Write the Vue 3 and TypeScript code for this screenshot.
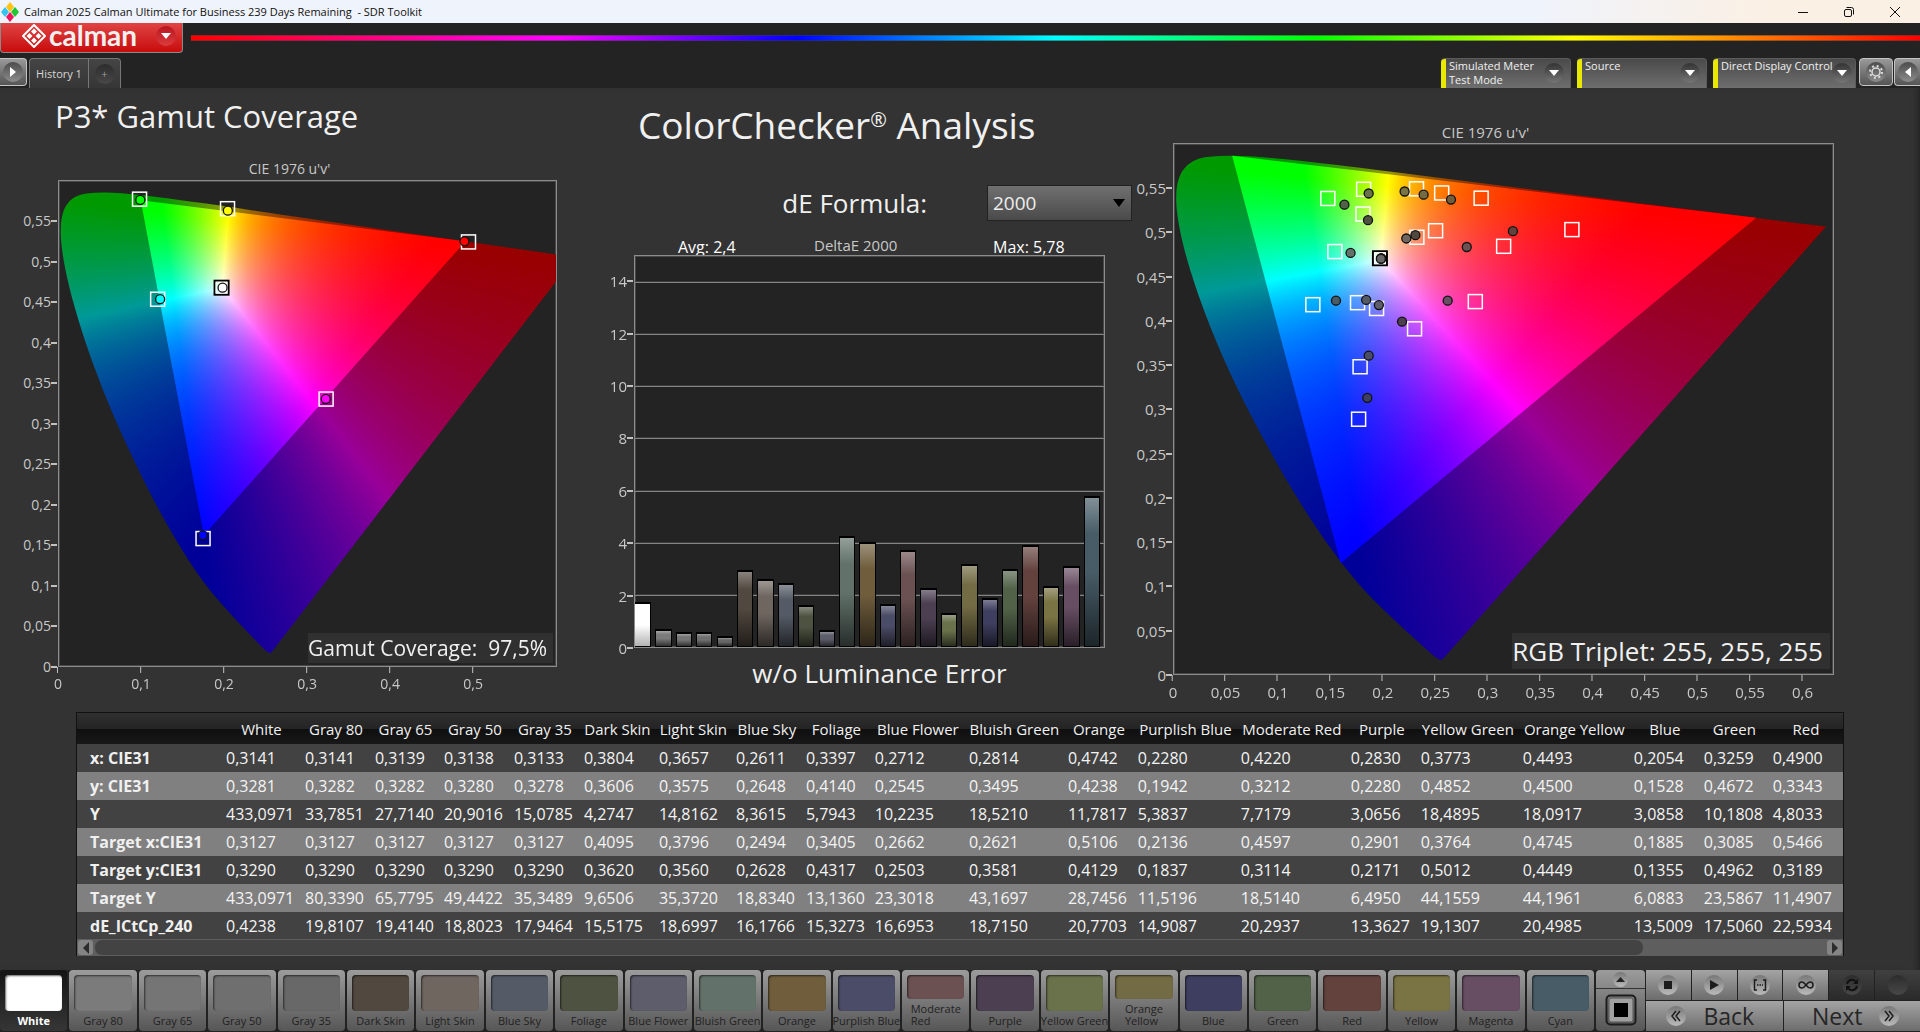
<script setup lang="ts">
import { onMounted, ref } from 'vue'

type Point = [number, number]

interface Patch {
  name: string
  color: string
  deltaE: number
  target: Point
  measured: Point
}

interface Axis {
  max: number
  ticks: number[]
}

/* CIE 1931 xy to CIE 1976 u'v' */
function uv(x: number, y: number): Point {
  const d = -2 * x + 12 * y + 3
  return [(4 * x) / d, (9 * y) / d]
}

const names = [
  'White', 'Gray 80', 'Gray 65', 'Gray 50', 'Gray 35', 'Dark Skin', 'Light Skin', 'Blue Sky', 'Foliage',
  'Blue Flower', 'Bluish Green', 'Orange', 'Purplish Blue', 'Moderate Red', 'Purple', 'Yellow Green',
  'Orange Yellow', 'Blue', 'Green', 'Red',
]

const columnWidths = [145, 79, 70, 69, 70, 70, 75, 77, 70, 69, 94, 99, 70, 103, 110, 70, 102, 111, 70, 69, 74]
const totalWidth = columnWidths.reduce((sum, w) => sum + w, 0)

const rows: { label: string; values: string[] }[] = [
  { label: 'x: CIE31', values: '0,3141 0,3141 0,3139 0,3138 0,3133 0,3804 0,3657 0,2611 0,3397 0,2712 0,2814 0,4742 0,2280 0,4220 0,2830 0,3773 0,4493 0,2054 0,3259 0,4900'.split(' ') },
  { label: 'y: CIE31', values: '0,3281 0,3282 0,3282 0,3280 0,3278 0,3606 0,3575 0,2648 0,4140 0,2545 0,3495 0,4238 0,1942 0,3212 0,2280 0,4852 0,4500 0,1528 0,4672 0,3343'.split(' ') },
  { label: 'Y', values: '433,0971 33,7851 27,7140 20,9016 15,0785 4,2747 14,8162 8,3615 5,7943 10,2235 18,5210 11,7817 5,3837 7,7179 3,0656 18,4895 18,0917 3,0858 10,1808 4,8033'.split(' ') },
  { label: 'Target x:CIE31', values: '0,3127 0,3127 0,3127 0,3127 0,3127 0,4095 0,3796 0,2494 0,3405 0,2662 0,2621 0,5106 0,2136 0,4597 0,2901 0,3764 0,4745 0,1885 0,3085 0,5466'.split(' ') },
  { label: 'Target y:CIE31', values: '0,3290 0,3290 0,3290 0,3290 0,3290 0,3620 0,3560 0,2628 0,4317 0,2503 0,3581 0,4129 0,1837 0,3114 0,2171 0,5012 0,4449 0,1355 0,4962 0,3189'.split(' ') },
  { label: 'Target Y', values: '433,0971 80,3390 65,7795 49,4422 35,3489 9,6506 35,3720 18,8340 13,1360 23,3018 43,1697 28,7456 11,5196 18,5140 6,4950 44,1559 44,1961 6,0883 23,5867 11,4907'.split(' ') },
  { label: 'dE_ICtCp_240', values: '0,4238 19,8107 19,4140 18,8023 17,9464 15,5175 18,6997 16,1766 15,3273 16,6953 18,7150 20,7703 14,9087 20,2937 13,3627 19,1307 20,4985 13,5009 17,5060 22,5934'.split(' ') },
]

const colors = [
  '#ffffff', '#7b7b7b', '#757575', '#6f6f6f', '#686868', '#51483f', '#6f6660', '#545b66', '#4e5341', '#5d5d6b',
  '#62726b', '#6f5d3c', '#4b4c67', '#6b5152', '#4b3f51', '#69724b', '#736b44', '#3e3e60', '#516248', '#63423e',
]
const deltas = [
  1.72, 0.69, 0.58, 0.58, 0.42, 2.95, 2.6, 2.45, 1.61, 0.65, 4.25, 4.02, 1.65, 3.72, 2.27, 1.31, 3.18, 1.88, 3, 3.9,
]

const num = (text: string) => Number(text.replace(',', '.'))

const patches: Patch[] = names.map((name, i) => ({
  name,
  color: colors[i],
  deltaE: deltas[i],
  target: uv(num(rows[3].values[i]), num(rows[4].values[i])),
  measured: uv(num(rows[0].values[i]), num(rows[1].values[i])),
}))
patches.push(
  { name: 'Yellow', color: '#7a7343', deltaE: 2.34, target: [0.2328, 0.5465], measured: [0.2214, 0.5435] },
  { name: 'Magenta', color: '#674e63', deltaE: 3.12, target: [0.289, 0.4195], measured: [0.2626, 0.4205] },
  { name: 'Cyan', color: '#475c67', deltaE: 5.78, target: [0.1337, 0.416], measured: [0.1558, 0.4205] },
)

const gamutPoints: { color: string; target: Point; measured: Point }[] = [
  { color: '#00ff00', target: [0.0986, 0.5785], measured: [0.0995, 0.5775] },
  { color: '#ffff00', target: [0.205, 0.5667], measured: [0.2054, 0.5642] },
  { color: '#ff0000', target: [0.4964, 0.5255], measured: [0.4915, 0.5262] },
  { color: '#00ffff', target: [0.1205, 0.4545], measured: [0.1235, 0.4545] },
  { color: '#ff00ff', target: [0.3242, 0.3308], measured: [0.3238, 0.331] },
  { color: '#0000ff', target: [0.1754, 0.1579], measured: [0.1752, 0.162] },
  { color: '#ffffff', target: [0.1978, 0.4688], measured: [0.199, 0.4688] },
]

const steps = (count: number, step: number) => Array.from({ length: count }, (_, i) => i * step)
const uAxisLeft: Axis = { max: 0.601, ticks: steps(6, 0.1) }
const vAxisLeft: Axis = { max: 0.601, ticks: steps(12, 0.05) }
const uAxisRight: Axis = { max: 0.63, ticks: steps(13, 0.05) }
const vAxisRight: Axis = { max: 0.601, ticks: steps(12, 0.05) }
const vMarkers: Axis = { max: 0.597, ticks: [] }
const deltaAxis: Axis = { max: 15, ticks: steps(8, 2) }

const pct = (value: number, axis: Axis) => (value / axis.max) * 100 + '%'
const pctDown = (value: number, axis: Axis) => (1 - value / axis.max) * 100 + '%'
const label = (value: number) => String(Math.round(value * 100) / 100).replace('.', ',')

/* Spectral locus, CIE 1931 xy, 380 nm to 700 nm */
const locus: Point[] = [
  [0.1741, 0.005], [0.1733, 0.0048], [0.1714, 0.0051], [0.1689, 0.0069], [0.1644, 0.0109], [0.1566, 0.0177],
  [0.144, 0.0297], [0.1355, 0.0399], [0.1241, 0.0578], [0.1096, 0.0868], [0.0913, 0.1327], [0.0687, 0.2007],
  [0.0454, 0.295], [0.0235, 0.4127], [0.0082, 0.5384], [0.0039, 0.6548], [0.0139, 0.7502], [0.0389, 0.812],
  [0.0743, 0.8338], [0.1142, 0.8262], [0.1547, 0.8059], [0.1929, 0.7816], [0.2296, 0.7543], [0.3016, 0.6923],
  [0.3731, 0.6245], [0.4441, 0.5547], [0.5125, 0.4866], [0.5752, 0.4242], [0.627, 0.3725], [0.6658, 0.334],
  [0.6915, 0.3083], [0.719, 0.2809], [0.7347, 0.2653],
]
const locusUv = locus.map(([x, y]) => uv(x, y))

function chromaticityColor(u: number, v: number): [number, number, number] {
  const d = 6 * u - 16 * v + 12
  const x = (9 * u) / d
  const y = Math.max((4 * v) / d, 0.0001)
  const X = x / y
  const Z = (1 - x - y) / y
  const r = Math.max(0, 3.2406 * X - 1.5372 - 0.4986 * Z)
  const g = Math.max(0, -0.9689 * X + 1.8758 + 0.0415 * Z)
  const b = Math.max(0, 0.0557 * X - 0.204 + 1.057 * Z)
  const scale = 255 / Math.max(r, g, b)
  return [r * scale, g * scale, b * scale]
}

function drawDiagram(canvas: HTMLCanvasElement, uMax: number, vMax: number, gamut: Point[]) {
  const w = (canvas.width = canvas.clientWidth)
  const h = (canvas.height = canvas.clientHeight)
  const ctx = canvas.getContext('2d')
  if (!ctx || !w || !h) return
  const layer = (shade: number, outline: Point[], smooth: boolean) => {
    const sheet = document.createElement('canvas')
    sheet.width = w
    sheet.height = h
    const c = sheet.getContext('2d')!
    const image = c.createImageData(w, h)
    for (let j = 0; j < h; j++) {
      for (let i = 0; i < w; i++) {
        const rgb = chromaticityColor(((i + 0.5) / w) * uMax, (1 - (j + 0.5) / h) * vMax)
        const o = (j * w + i) * 4
        image.data[o] = rgb[0] * shade
        image.data[o + 1] = rgb[1] * shade
        image.data[o + 2] = rgb[2] * shade
        image.data[o + 3] = 255
      }
    }
    c.putImageData(image, 0, 0)
    c.globalCompositeOperation = 'destination-in'
    const p = outline.map(([u, v]): Point => [(u / uMax) * w, (1 - v / vMax) * h])
    c.beginPath()
    c.moveTo(p[0][0], p[0][1])
    for (let i = 1; i < p.length; i++) {
      if (smooth && i < p.length - 1) {
        c.quadraticCurveTo(p[i][0], p[i][1], (p[i][0] + p[i + 1][0]) / 2, (p[i][1] + p[i + 1][1]) / 2)
      } else {
        c.lineTo(p[i][0], p[i][1])
      }
    }
    c.closePath()
    c.fill()
    return sheet
  }
  ctx.drawImage(layer(0.6, locusUv, true), 0, 0)
  ctx.drawImage(layer(1, gamut, false), 0, 0)
}

const leftCanvas = ref<HTMLCanvasElement | null>(null)
const rightCanvas = ref<HTMLCanvasElement | null>(null)

onMounted(() => {
  if (leftCanvas.value) {
    drawDiagram(leftCanvas.value, uAxisLeft.max, vAxisLeft.max, [[0.4915, 0.5262], [0.0988, 0.577], [0.1752, 0.162]])
  }
  if (rightCanvas.value) {
    drawDiagram(rightCanvas.value, uAxisRight.max, 0.6, [[0.5566, 0.5165], [0.0556, 0.5868], [0.1593, 0.1258]])
  }
})

const formula = ref('2000')
const selected = ref('White')
const wrapped: Record<string, string> = { 'Moderate Red': 'Moderate\nRed', 'Orange Yellow': 'Orange\nYellow' }
const devices = [
  { text: 'Simulated Meter\nTest Mode', wide: false },
  { text: 'Source', wide: false },
  { text: 'Direct Display Control', wide: true },
]
</script>

<template>
  <div class="app">
    <div class="titlebar">
      <svg class="app-icon" width="18" height="20" viewBox="0 0 18 20" aria-hidden="true">
        <path d="M9 0l4 5-4 5-4-5z" fill="#ffc20e" />
        <path d="M4 5l4 5-4 5-4-5z" fill="#35c4f0" />
        <path d="M14 5l4 5-4 5-4-5z" fill="#22c532" />
        <path d="M9 10l4 5-4 5-4-5z" fill="#f0145a" />
      </svg>
      <span class="window-title">Calman 2025 Calman Ultimate for Business 239 Days Remaining&nbsp; - SDR Toolkit</span>
      <div class="window-buttons">
        <button type="button" aria-label="Minimize">
          <svg width="12" height="12" viewBox="0 0 12 12"><path d="M1 6.500h10" stroke="#111" fill="none" /></svg>
        </button>
        <button type="button" aria-label="Restore">
          <svg width="12" height="12" viewBox="0 0 12 12" fill="none" stroke="#111">
            <rect x="1.500" y="3.500" width="7" height="7" rx="1.500" />
            <path d="M3.500 1.500h5a2 2 0 0 1 2 2v5" />
          </svg>
        </button>
        <button type="button" aria-label="Close">
          <svg width="12" height="12" viewBox="0 0 12 12"><path d="M1 1l10 10M11 1L1 11" stroke="#111" fill="none" /></svg>
        </button>
      </div>
    </div>

    <header class="header">
      <div class="brand-row">
        <button type="button" class="brand">
          <svg width="24" height="24" viewBox="0 0 24 24" aria-hidden="true">
            <path d="M12 1l11 11-11 11L1 12z" fill="none" stroke="#fff" stroke-width="2" stroke-linejoin="round" />
            <path d="M12 4.500l3 3-3 3-3-3zM7.500 9l3 3-3 3-3-3zM16.500 9l3 3-3 3-3-3zM12 13.500l3 3-3 3-3-3z" fill="#fff" />
          </svg>
          <span class="wordmark">calman</span>
          <span class="round red-round"><svg width="10" height="6" viewBox="0 0 10 6"><path d="M0 0h10L5 6z" fill="#fff" /></svg></span>
        </button>
        <div class="spectrum"></div>
      </div>
      <div class="tab-row">
        <button type="button" class="square-button first" aria-label="Expand">
          <span class="round"><svg width="6" height="10" viewBox="0 0 6 10"><path d="M0 0v10l6-5z" fill="#fff" /></svg></span>
        </button>
        <div class="tabs">
          <button type="button" class="tab">History 1</button>
          <button type="button" class="tab add" aria-label="Add tab"><span class="round dark-round">+</span></button>
        </div>
        <div class="devices">
          <button v-for="d in devices" :key="d.text" type="button" class="device" :class="{ wide: d.wide }">
            <span class="device-text">{{ d.text }}</span>
            <span class="round deep-round"><svg width="10" height="6" viewBox="0 0 10 6"><path d="M0 0h10L5 6z" fill="#fff" /></svg></span>
          </button>
          <button type="button" class="square-button gear" aria-label="Settings">
            <span class="round">
              <svg width="14" height="14" viewBox="0 0 14 14">
                <circle cx="7" cy="7" r="4" fill="none" stroke="#ddd" stroke-width="1.500" />
                <circle cx="7" cy="7" r="6" fill="none" stroke="#ddd" stroke-width="2" stroke-dasharray="2 2.710" />
              </svg>
            </span>
          </button>
          <button type="button" class="square-button last" aria-label="Collapse">
            <span class="round"><svg width="6" height="10" viewBox="0 0 6 10"><path d="M6 0v10L0 5z" fill="#fff" /></svg></span>
          </button>
        </div>
      </div>
    </header>

    <main class="main">
      <div class="panels">
        <section class="panel left">
          <h1 class="gamut-title">P3* Gamut Coverage</h1>
          <div class="chart">
            <div class="chart-title">CIE 1976 u'v'</div>
            <div class="y-axis">
              <span v-for="t in vAxisLeft.ticks" :key="t" class="y-tick" :style="{ top: pctDown(t, vAxisLeft) }">{{ label(t) }}</span>
            </div>
            <div class="plot left-plot">
              <canvas ref="leftCanvas" class="layer"></canvas>
              <svg class="layer markers">
                <svg v-for="(p, i) in gamutPoints" :key="'t' + i" class="spot" :x="pct(p.target[0], uAxisLeft)" :y="pctDown(p.target[1], vAxisLeft)">
                  <rect v-if="i === 6" x="-7" y="-7" width="14" height="14" fill="none" stroke="#000" stroke-width="2" />
                  <rect v-else x="-7" y="-7" width="14" height="14" fill="none" stroke="#fff" stroke-width="1.500" />
                  <rect v-if="i === 6" x="-5.500" y="-5.500" width="11" height="11" fill="none" stroke="#fff" />
                </svg>
                <svg v-for="(p, i) in gamutPoints" :key="'m' + i" class="spot" :x="pct(p.measured[0], uAxisLeft)" :y="pctDown(p.measured[1], vAxisLeft)">
                  <circle r="4.500" :fill="p.color" stroke="#111" stroke-width="1.300" />
                </svg>
              </svg>
              <div class="note small-note">Gamut Coverage:&nbsp; 97,5%</div>
            </div>
            <div class="x-axis">
              <span v-for="t in uAxisLeft.ticks" :key="t" class="x-tick" :style="{ left: pct(t, uAxisLeft) }">{{ label(t) }}</span>
            </div>
          </div>
        </section>

        <section class="panel center">
          <h2 class="analysis-title">ColorChecker<span class="registered">®</span> Analysis</h2>
          <div class="formula">
            <label for="formula">dE Formula:</label>
            <div class="select-wrap">
              <select id="formula" v-model="formula">
                <option>2000</option>
              </select>
              <svg width="12" height="8" viewBox="0 0 12 8" aria-hidden="true"><path d="M0 0h12L6 8z" fill="#000" /></svg>
            </div>
          </div>
          <div class="stats">
            <span class="stat">Avg: 2,4</span>
            <span class="stat-title">DeltaE 2000</span>
            <span class="stat">Max: 5,78</span>
          </div>
          <div class="chart center-chart">
            <div class="y-axis">
              <span v-for="t in deltaAxis.ticks" :key="t" class="y-tick" :style="{ top: pctDown(t, deltaAxis) }">{{ t }}</span>
            </div>
            <div class="plot bar-plot">
              <i v-for="t in deltaAxis.ticks.slice(1)" :key="t" class="grid-line" :style="{ top: pctDown(t, deltaAxis) }"></i>
              <div class="bars">
                <div v-for="p in patches" :key="p.name" class="bar" :class="{ white: p.name === 'White' }" :style="{ height: pct(p.deltaE, deltaAxis), backgroundColor: p.color }"></div>
              </div>
            </div>
          </div>
          <div class="luminance">w/o Luminance Error</div>
        </section>

        <section class="panel right">
          <div class="chart">
            <div class="chart-title">CIE 1976 u'v'</div>
            <div class="y-axis">
              <span v-for="t in vAxisRight.ticks" :key="t" class="y-tick" :style="{ top: pctDown(t, vAxisRight) }">{{ label(t) }}</span>
            </div>
            <div class="plot right-plot">
              <canvas ref="rightCanvas" class="layer"></canvas>
              <svg class="layer markers">
                <svg v-for="(p, i) in patches.slice(5)" :key="'t' + i" class="spot" :x="pct(p.target[0], uAxisRight)" :y="pctDown(p.target[1], vMarkers)">
                  <rect x="-7" y="-7" width="14" height="14" fill="none" stroke="#fff" stroke-width="1.500" />
                </svg>
                <svg class="spot" :x="pct(patches[0].target[0], uAxisRight)" :y="pctDown(patches[0].target[1], vMarkers)">
                  <rect x="-7" y="-7" width="14" height="14" fill="none" stroke="#000" stroke-width="2" />
                  <rect x="-5.500" y="-5.500" width="11" height="11" fill="none" stroke="#fff" />
                </svg>
                <svg v-for="(p, i) in patches.slice(1)" :key="'m' + i" class="spot" :x="pct(p.measured[0], uAxisRight)" :y="pctDown(p.measured[1], vMarkers)">
                  <circle r="4.500" :fill="p.color" stroke="#111" stroke-width="1.300" />
                </svg>
              </svg>
              <div class="note large-note">RGB Triplet: 255, 255, 255</div>
            </div>
            <div class="x-axis">
              <span v-for="t in uAxisRight.ticks" :key="t" class="x-tick" :style="{ left: pct(t, uAxisRight) }">{{ label(t) }}</span>
            </div>
          </div>
        </section>
      </div>

      <div class="table-box">
        <table>
          <colgroup>
            <col v-for="(w, i) in columnWidths" :key="i" :style="{ width: (w / totalWidth) * 100 + '%' }" />
          </colgroup>
          <thead>
            <tr>
              <th></th>
              <th v-for="n in names" :key="n" scope="col">{{ n }}</th>
            </tr>
          </thead>
          <tbody>
            <tr v-for="r in rows" :key="r.label">
              <th scope="row">{{ r.label }}</th>
              <td v-for="(v, i) in r.values" :key="i">{{ v }}</td>
            </tr>
          </tbody>
        </table>
        <div class="scrollbar">
          <button type="button" aria-label="Scroll left"><svg width="6" height="12" viewBox="0 0 6 12"><path d="M6 0v12L0 6z" fill="#2c2c2c" /></svg></button>
          <div class="track"><div class="thumb"></div></div>
          <button type="button" aria-label="Scroll right"><svg width="6" height="12" viewBox="0 0 6 12"><path d="M0 0v12l6-6z" fill="#2c2c2c" /></svg></button>
        </div>
      </div>
    </main>

    <footer class="footer">
      <div class="tiles">
        <button v-for="p in patches" :key="p.name" type="button" class="tile" :class="{ active: p.name === selected }" @click="selected = p.name">
          <span class="swatch" :style="{ backgroundColor: p.color }"></span>
          <span class="tile-label">{{ wrapped[p.name] || p.name }}</span>
        </button>
      </div>
      <div class="pattern">
        <button type="button" class="pattern-up" aria-label="Show patterns">
          <span class="round light-round"><svg width="9" height="5" viewBox="0 0 9 5"><path d="M0 5h9L4.500 0z" fill="#222" /></svg></span>
        </button>
        <button type="button" class="pattern-window" aria-label="Pattern window">
          <svg width="32" height="32" viewBox="0 0 32 32">
            <rect x="1.500" y="1.500" width="29" height="29" rx="4" fill="none" stroke="#1c1c1c" stroke-width="2" />
            <rect x="4" y="4" width="24" height="24" rx="2" fill="#a0a0a0" stroke="#555" />
            <rect x="9" y="9" width="14" height="14" fill="#000" />
          </svg>
        </button>
      </div>
      <div class="transport">
        <div class="transport-row">
          <button type="button" aria-label="Stop"><span class="round light-round"><svg width="8" height="8" viewBox="0 0 8 8"><path d="M0 0h8v8H0z" fill="#1c1c1c" /></svg></span></button>
          <button type="button" aria-label="Read"><span class="round light-round"><svg width="10" height="10" viewBox="0 0 10 10"><path d="M1 0v10l9-5z" fill="#1c1c1c" /></svg></span></button>
          <button type="button" aria-label="Read series">
            <span class="round light-round">
              <svg width="14" height="12" viewBox="0 0 14 12" fill="none" stroke="#1c1c1c" stroke-width="1.500"><path d="M4 1H1.500v10H4M10 1h2.500v10H10" /><path d="M4 6h6" stroke-dasharray="1.500 1" /></svg>
            </span>
          </button>
          <button type="button" aria-label="Read continuously">
            <span class="round light-round">
              <svg width="16" height="8" viewBox="0 0 16 8" fill="none" stroke="#1c1c1c" stroke-width="1.500"><path d="M8 4C6 1.500 5 1 4 1a3 3 0 0 0 0 6c1 0 2-.5 4-3s3-3 4-3a3 3 0 0 1 0 6c-1 0-2-.5-4-3z" /></svg>
            </span>
          </button>
          <button type="button" class="off" aria-label="Refresh">
            <span class="round dim-round">
              <svg width="14" height="14" viewBox="0 0 14 14" fill="none" stroke="#111" stroke-width="2"><path d="M2 6a5 5 0 0 1 9-2M12 8a5 5 0 0 1-9 2" /><path d="M13 1v5H8zM1 13V8h5z" fill="#111" stroke="none" /></svg>
            </span>
          </button>
          <button type="button" class="off" aria-label="Unavailable"><span class="round dim-round"></span></button>
        </div>
        <div class="nav-row">
          <button type="button" class="back">
            <span class="round light-round"><svg width="12" height="12" viewBox="0 0 12 12" fill="none" stroke="#1c1c1c" stroke-width="1.500"><path d="M6 1L2 6l4 5M10 1L6 6l4 5" /></svg></span>
            Back
          </button>
          <button type="button" class="next">
            Next
            <span class="round light-round"><svg width="12" height="12" viewBox="0 0 12 12" fill="none" stroke="#1c1c1c" stroke-width="1.500"><path d="M2 1l4 5-4 5M6 1l4 5-4 5" /></svg></span>
          </button>
        </div>
      </div>
    </footer>
  </div>
</template>

<style>
body {
  background: #333333;
}
</style>

<style scoped>
.app {
  display: flex;
  flex-direction: column;
  min-height: 100vh;
  overflow: hidden;
  background: #333333;
  color: #f0f0f0;
  font-family: 'Open Sans', 'Noto Sans', sans-serif;
}
.app *,
.app *::before,
.app *::after {
  box-sizing: border-box;
}
button {
  margin: 0;
  padding: 0;
  border: 0;
  background: none;
  color: inherit;
  font: inherit;
}
h1,
h2 {
  margin: 0;
  font-weight: 400;
}
.titlebar {
  display: flex;
  align-items: center;
  height: 23px;
  padding-left: 1px;
  background: linear-gradient(90deg, #eff3fb 0, #eff3fb 80%, #fbf0e4 92%, #fbf0e4 100%);
  color: #111;
}
.app-icon {
  margin-right: 5px;
}
.window-title {
  flex: 1;
  font-size: 11px;
  line-height: 20px;
}
.window-buttons {
  display: flex;
  gap: 34px;
  padding-right: 19px;
}
.window-buttons button {
  display: flex;
  width: 12px;
  height: 12px;
}
.header {
  height: 65px;
  background: #232323;
}
.brand-row {
  display: flex;
  gap: 8px;
  height: 35px;
}
.brand {
  display: flex;
  align-items: center;
  width: 183px;
  height: 30px;
  padding: 0 6px 3px 21px;
  border: 1px solid #8a8a8a;
  border-top: 0;
  border-radius: 0 0 4px 4px;
  background: linear-gradient(#e04444, #c80c0c);
}
.wordmark {
  margin: 0 0 2px 3px;
  font-family: Lato, 'Open Sans', sans-serif;
  font-size: 28px;
  font-weight: 700;
  line-height: 24px;
}
.round {
  display: flex;
  flex: none;
  align-items: center;
  justify-content: center;
  width: 20px;
  height: 20px;
  border-radius: 50%;
  background: linear-gradient(#4c4c4c, #8c8c8c);
}
.red-round {
  margin-left: auto;
  background: linear-gradient(#b81620, #dc3c3c);
}
.dark-round {
  background: linear-gradient(#2c2c2c, #484848);
  color: #9a9a9a;
}
.deep-round {
  background: linear-gradient(#333, #767676);
}
.light-round {
  background: linear-gradient(#777, #bbb);
}
.dim-round {
  background: linear-gradient(#2c2c2c, #484848);
}
.spectrum {
  flex: 1;
  height: 6px;
  margin-top: 12px;
  border: 1px solid rgba(60, 60, 60, 0.5);
  border-width: 1px 0;
  background: linear-gradient(90deg, #f00, #f0f 21%, #00f 35%, #0ff 50%, #0f0 65%, #ff0 80%, #f00) border-box;
}
.tab-row {
  display: flex;
  height: 30px;
}
.square-button {
  display: flex;
  align-items: center;
  justify-content: center;
  height: 28px;
  border: 1px solid #c4c4c4;
  border-radius: 4px;
  background: linear-gradient(#999, #555);
}
.first {
  width: 27px;
  border-left: 0;
  border-radius: 0 4px 4px 0;
}
.tabs {
  display: flex;
  margin-left: 2px;
  border: 1px solid #777;
  border-bottom: 0;
  border-radius: 4px 4px 0 0;
  background: linear-gradient(#444, #363636);
}
.tab {
  display: flex;
  align-items: center;
  justify-content: center;
  width: 58px;
  color: #d8d8d8;
  font-size: 11px;
}
.add {
  width: 32px;
  border-left: 1px solid #777;
}
.devices {
  display: flex;
  margin-left: auto;
}
.device {
  display: flex;
  width: 130px;
  margin-right: 6px;
  padding: 0 6px 0 3px;
  border: 1px solid #5c5c5c;
  border-width: 1px 1px 0 0;
  border-radius: 4px 4px 0 0;
  background: linear-gradient(90deg, #e8e800 5px, transparent 5px), linear-gradient(#4a4a4a, #6e6e6e);
  text-align: left;
}
.device.wide {
  width: 143px;
  margin-right: 3px;
}
.device-text {
  flex: 1;
  padding-left: 5px;
  font-size: 11px;
  line-height: 14px;
  white-space: pre;
}
.device .round {
  margin-top: 4px;
}
.device.wide {
  padding-right: 3px;
}
.wide .device-text {
  width: 0;
}
.gear {
  width: 34px;
  margin-right: 1px;
}
.last {
  width: 26px;
  border-right: 0;
  border-radius: 4px 0 0 4px;
}
.main {
  flex: 1;
  box-shadow: inset -6px 0 6px -4px #222;
}
.panels {
  display: grid;
  grid-template-columns: 557fr 575fr 702fr 86fr;
  align-items: start;
}
.gamut-title {
  margin: 8px 0 23px 55px;
  font-size: 31px;
  line-height: 40px;
}
.chart {
  display: grid;
  grid-template-columns: 58px 1fr;
  font-size: 14px;
}
.center-chart,
.right .chart {
  font-size: 15px;
}
.chart-title {
  grid-column: 2;
  padding-right: 36px;
  margin-bottom: 1px;
  color: #c8c8c8;
  line-height: 20px;
  text-align: center;
}
.y-axis {
  position: relative;
  grid-column: 1;
}
.y-tick {
  position: absolute;
  right: 1px;
  padding-right: 6px;
  color: #c8c8c8;
  line-height: 20px;
  transform: translateY(-50%);
}
.y-tick::after {
  content: '';
  position: absolute;
  top: 9px;
  right: 0;
  width: 6px;
  height: 2px;
  background: #c0c0c0;
}
.plot {
  position: relative;
  border: 1px solid #8c8c8c;
  background: #232323;
  box-shadow: inset 0 0 0 1px #484848;
}
.left-plot {
  aspect-ratio: 499 / 487;
}
.right-plot {
  aspect-ratio: 661 / 532;
}
.bar-plot {
  aspect-ratio: 471 / 393;
}
.layer {
  position: absolute;
  inset: 0;
  display: block;
  width: 100%;
  height: 100%;
}
.markers {
  left: -1px;
}
.spot {
  overflow: visible;
}
.x-axis {
  position: relative;
  grid-column: 2;
  height: 26px;
}
.x-tick {
  position: absolute;
  top: 0;
  padding-top: 7px;
  color: #c8c8c8;
  line-height: 20px;
  transform: translateX(-50%);
}
.x-tick::before {
  content: '';
  position: absolute;
  top: 0;
  left: calc(50% - 1px);
  width: 1px;
  height: 6px;
  background: #c0c0c0;
}
.note {
  position: absolute;
  right: 3px;
  bottom: 3px;
  background: #303030;
  white-space: nowrap;
}
.small-note {
  padding-right: 6px;
  font-size: 21px;
  line-height: 30px;
}
.large-note {
  bottom: 5px;
  padding-right: 7px;
  font-size: 26px;
  line-height: 36px;
}
.center {
  padding-top: 13px;
}
.analysis-title {
  margin-left: 81px;
  font-size: 37px;
  line-height: 48px;
  white-space: nowrap;
}
.registered {
  font-size: 20px;
  line-height: 20px;
  vertical-align: 12px;
}
.formula {
  display: flex;
  align-items: center;
  justify-content: flex-end;
  gap: 60px;
  margin-top: 36px;
  font-size: 26px;
  line-height: 35px;
}
.select-wrap {
  display: grid;
  align-items: center;
  width: 145px;
}
.select-wrap > * {
  grid-area: 1 / 1;
}
.select-wrap svg {
  justify-self: end;
  margin-right: 7px;
  pointer-events: none;
}
select {
  appearance: none;
  width: 100%;
  height: 36px;
  margin: 0;
  padding: 0 5px;
  border: 1px solid #222;
  border-radius: 0;
  background: linear-gradient(#707070, #4a4a4a);
  color: #eee;
  font-family: inherit;
  font-size: 19px;
}
.stats {
  display: grid;
  grid-template-columns: 136fr 179fr 73fr;
  height: 20px;
  margin: 14px 66px 0 121px;
  white-space: nowrap;
}
.stat {
  align-self: end;
  color: #fff;
  font-size: 16px;
  line-height: 16px;
}
.stat-title {
  color: #c8c8c8;
  font-size: 15px;
  line-height: 20px;
}
.center-chart {
  grid-template-columns: 77px 1fr;
  padding-right: 27px;
}
.grid-line {
  position: absolute;
  left: 0;
  right: 0;
  height: 2px;
  margin-top: -1px;
  border-top: 1px solid #3c3c3c;
  background: #858585;
}
.bars {
  position: relative;
  display: grid;
  grid-template-columns: repeat(23, 1fr);
  align-items: end;
  height: 100%;
}
.bar {
  width: 80%;
  border: 1px solid #000;
  border-top-width: 2px;
  background-image: linear-gradient(rgba(255, 255, 255, 0.32), rgba(255, 255, 255, 0) 24%, rgba(0, 0, 0, 0) 50%, rgba(0, 0, 0, 0.6));
}
.bar.white {
  border-left: 0;
  background-image: linear-gradient(transparent 50%, rgba(0, 0, 0, 0.3));
}
.luminance {
  padding-left: 135px;
  margin: 7px 65px 0 0;
  font-size: 26px;
  line-height: 36px;
  text-align: center;
  white-space: nowrap;
}
.right {
  padding-top: 34px;
}
.right .chart {
  grid-template-columns: 41px 1fr;
}
.table-box {
  margin: 11px 76px 0 76px;
  border: 1px solid #111;
  border-bottom: 0;
}
table {
  width: 100%;
  border-collapse: collapse;
  table-layout: fixed;
  font-size: 16px;
  line-height: 20px;
  white-space: nowrap;
}
thead tr {
  height: 31px;
  background: linear-gradient(#303030 0, #242424 50%, #0f0f0f 52%, #181818 100%);
}
thead th {
  padding: 0 4px;
  font-size: 15px;
  font-weight: 400;
}
tbody tr {
  height: 28px;
  background: #424242;
}
tbody tr:nth-child(even) {
  background: #808080;
}
tbody tr:last-child {
  height: 27px;
}
td {
  padding: 0 4px;
  color: #f4f4f4;
}
tbody th {
  padding: 0 0 0 13px;
  font-weight: 700;
  text-align: left;
}
.scrollbar {
  display: flex;
  align-items: center;
  height: 17px;
  padding: 0 1px;
  background: #5e5e5e;
}
.scrollbar button {
  display: flex;
  align-items: center;
  justify-content: center;
  width: 15px;
  height: 15px;
  border-radius: 3px;
  background: #848484;
}
.track {
  flex: 1;
  padding: 0 2px;
}
.thumb {
  width: calc(90% - 9px);
  height: 15px;
  border-radius: 7px;
  background: #434343;
}
.footer {
  display: grid;
  grid-template-columns: 1596fr 50fr 274fr;
  height: 62px;
  background: #222;
}
.tiles {
  display: grid;
  grid-template-columns: repeat(23, minmax(0, 1fr));
  gap: 2px;
  padding-right: 2px;
}
.tile {
  display: flex;
  flex-direction: column;
  align-items: center;
  gap: 4px;
  height: 61px;
  padding: 5px 5px 4px;
  border-radius: 4px;
  background: linear-gradient(#9c9c9c, #565656);
  color: #222;
}
.tile.active {
  background: linear-gradient(#141414, #363636);
  color: #fff;
  font-weight: 700;
}
.swatch {
  flex: 1;
  align-self: stretch;
  border-radius: 4px;
  box-shadow: inset 1px 1px 2px rgba(0, 0, 0, 0.6);
}
.tile-label {
  font-size: 11px;
  line-height: 12px;
  text-align: left;
  white-space: pre;
}
.pattern {
  display: flex;
  flex-direction: column;
  height: 61px;
  margin-right: 1px;
  border-radius: 4px;
  background: linear-gradient(#9c9c9c, #565656);
}
.pattern-up {
  display: flex;
  justify-content: center;
  height: 19px;
  padding-top: 2px;
  border-bottom: 1px solid #333;
}
.pattern-up .round {
  width: 15px;
  height: 15px;
}
.pattern-window {
  display: flex;
  flex: 1;
  align-items: center;
  justify-content: center;
}
.transport {
  display: grid;
  grid-template-rows: 30px 30px;
  gap: 1px;
}
.transport-row {
  display: grid;
  grid-template-columns: repeat(6, 1fr);
  gap: 1px;
}
.nav-row {
  display: grid;
  grid-template-columns: 1fr 1fr;
  gap: 1px;
}
.transport button {
  display: flex;
  align-items: center;
  justify-content: center;
  background: linear-gradient(#a4a4a4, #6c6c6c);
}
.transport .off {
  background: linear-gradient(#404040, #2a2a2a);
}
.nav-row button {
  gap: 17px;
  color: #262626;
  font-size: 23px;
  font-weight: 500;
  line-height: 28px;
}
.nav-row .back {
  padding-right: 8px;
}
.nav-row .next {
  padding-left: 8px;
}
</style>
